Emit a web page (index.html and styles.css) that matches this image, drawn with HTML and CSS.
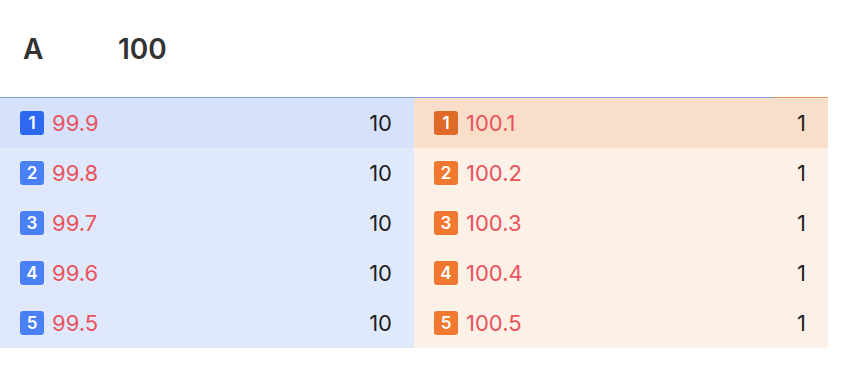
FILE: index.html
```html
<!DOCTYPE html>
<html>
<head>
<meta charset="utf-8">
<link rel="stylesheet" href="styles.css">
</head>
<body>
<div class="book">
  <div class="header">
    <span class="sym">A</span>
    <span class="price">100</span>
  </div>
  <div class="ratio">
    <div class="ratio-bid" style="width: 93.5%"></div>
    <div class="ratio-ask"></div>
  </div>
  <div class="sides">
    <div class="side bids">
      <div class="row top"><span class="badge">1</span><span class="px">99.9</span><span class="qty">10</span></div>
      <div class="row"><span class="badge">2</span><span class="px">99.8</span><span class="qty">10</span></div>
      <div class="row"><span class="badge">3</span><span class="px">99.7</span><span class="qty">10</span></div>
      <div class="row"><span class="badge">4</span><span class="px">99.6</span><span class="qty">10</span></div>
      <div class="row"><span class="badge">5</span><span class="px">99.5</span><span class="qty">10</span></div>
    </div>
    <div class="side asks">
      <div class="row top"><span class="badge">1</span><span class="px">100.1</span><span class="qty">1</span></div>
      <div class="row"><span class="badge">2</span><span class="px">100.2</span><span class="qty">1</span></div>
      <div class="row"><span class="badge">3</span><span class="px">100.3</span><span class="qty">1</span></div>
      <div class="row"><span class="badge">4</span><span class="px">100.4</span><span class="qty">1</span></div>
      <div class="row"><span class="badge">5</span><span class="px">100.5</span><span class="qty">1</span></div>
    </div>
  </div>
</div>
</body>
</html>
```
FILE: styles.css
```css
html, body {
  margin: 0;
  padding: 0;
  background: #ffffff;
  font-family: Inter, "Noto Sans", "Liberation Sans", sans-serif;
}
.book {
  width: 828px;
}
.header {
  height: 97px;
  display: flex;
  align-items: center;
  padding-left: 23px;
  font-size: 28px;
  font-weight: 600;
  color: #333333;
  box-sizing: border-box;
}
.sym {
  width: 95px;
}
.ratio {
  display: flex;
  height: 1px;
}
.ratio-bid {
  background: #7d9fe6;
}
.ratio-ask {
  flex: 1;
  background: #ec995e;
}
.sides {
  display: grid;
  grid-template-columns: 1fr 1fr;
}
.row {
  height: 50px;
  display: flex;
  align-items: center;
  padding: 0 22px 0 20px;
  font-size: 22px;
}
.bids .row { background: #e0e9fb; }
.bids .row.top { background: #d6e2fb; }
.asks .row { background: #fcf0e7; }
.asks .row.top { background: #f9dfca; }
.badge {
  width: 24px;
  height: 24px;
  border-radius: 3px;
  color: #ffffff;
  font-size: 17px;
  font-weight: 600;
  display: flex;
  align-items: center;
  justify-content: center;
  margin-right: 8px;
}
.bids .badge { background: #4a80f5; }
.bids .top .badge { background: #2e68f0; }
.asks .badge { background: #f0782f; }
.asks .top .badge { background: #e06a27; }
.px {
  color: #e8545c;
  flex: 1;
}
.qty {
  color: #1f1f1f;
}
```
